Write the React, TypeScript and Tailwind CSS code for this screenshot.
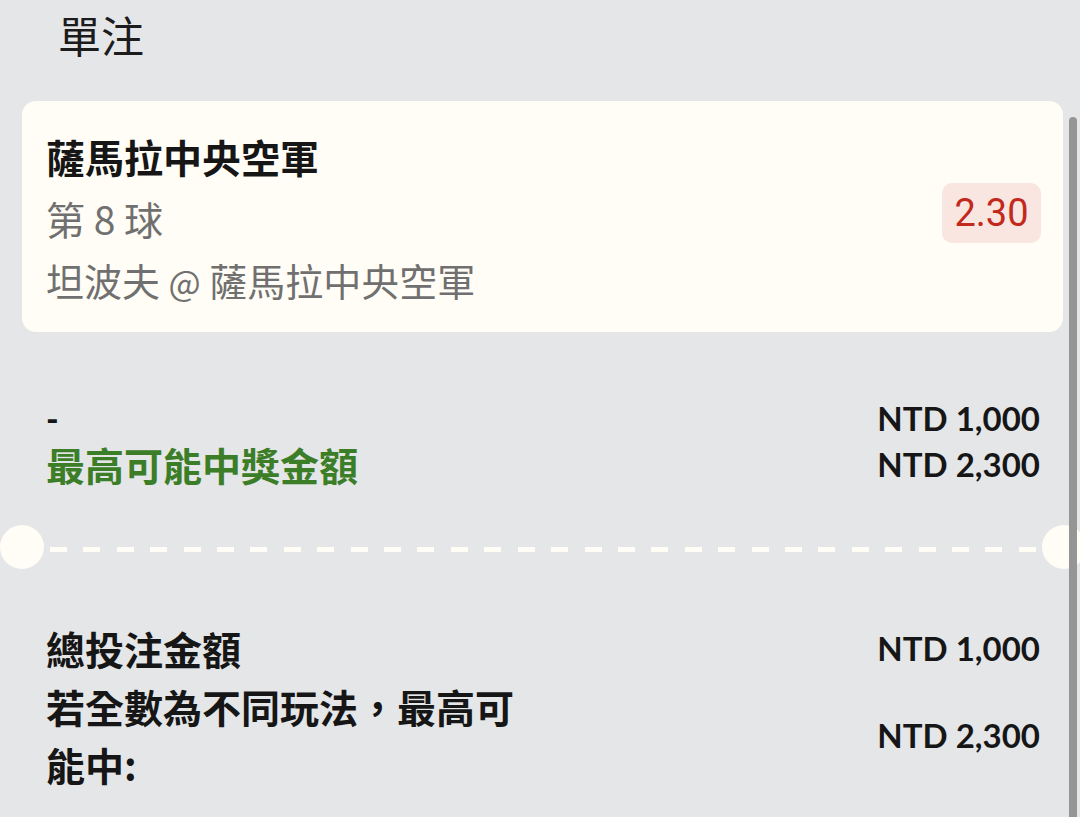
import React from "react";

const cjk = "font-['Noto_Sans_CJK_TC','Noto_Sans',sans-serif]";
const latin = "font-['Lato','Noto_Sans_CJK_TC',sans-serif]";

function Money({ value }: { value: string }) {
  return (
    <span className={`${latin} text-[33px] font-bold text-[#161616] whitespace-nowrap`}>
      NTD {value}
    </span>
  );
}

export default function App() {
  const dashes = Array.from({ length: 30 });

  return (
    <div className={`relative h-[817px] w-[1080px] overflow-hidden bg-[#e5e6e8] ${cjk}`}>
      {/* Title */}
      <div className="pl-[58px] pt-[13px] text-[43px] leading-[42px] text-[#1c1c1c]">單注</div>

      {/* Selection card */}
      <div className="ml-[22px] mr-[17px] mt-[46px] flex items-center justify-between rounded-[14px] bg-[#fffdf5] pl-[24px] pr-[22px] pt-[24px] pb-[21px]">
        <div className="leading-[62px]">
          <div className="text-[39px] font-bold text-[#161616]">薩馬拉中央空軍</div>
          <div className="text-[39px] text-[#707070]">第 8 球</div>
          <div className="h-[62px] text-[38px] text-[#707070]">
            坦波夫 <span className="text-[34px]">@</span> 薩馬拉中央空軍
          </div>
        </div>
        <div className="mb-[10px] flex h-[60px] w-[99px] items-center justify-center rounded-[10px] bg-[#f9e6e0] font-['Roboto',sans-serif] text-[38px] text-[#c3281d]">
          2.30
        </div>
      </div>

      {/* Stake and potential win */}
      <div className="mt-[63px] pl-[46px] pr-[40px] leading-[46px]">
        <div className="flex items-center justify-between">
          <span className={`${latin} text-[34px] font-black text-[#161616]`}>-</span>
          <Money value="1,000" />
        </div>
        <div className="flex items-center justify-between">
          <span className="text-[39px] font-bold text-[#3c7e28]">最高可能中獎金額</span>
          <Money value="2,300" />
        </div>
      </div>

      {/* Ticket divider */}
      <div className="mt-[38px] flex h-[44px] w-[1086px] items-center">
        <div className="h-[44px] w-[44px] shrink-0 rounded-full bg-[#fffdf5]" />
        <div className="flex flex-1 items-center justify-between px-[6px]">
          {dashes.map((_, i) => (
            <div key={i} className="mt-[4px] h-[5px] w-[17px] bg-[#fffdf5]" />
          ))}
        </div>
        <div className="h-[44px] w-[44px] shrink-0 rounded-full bg-[#fffdf5]" />
      </div>

      {/* Totals */}
      <div className="mt-[50px] pl-[46px] pr-[40px] text-[39px] font-bold leading-[58px] text-[#161616]">
        <div className="flex items-center justify-between">
          <span>總投注金額</span>
          <Money value="1,000" />
        </div>
        <div className="flex items-center justify-between">
          <span className="w-[480px]">若全數為不同玩法，最高可能中:</span>
          <Money value="2,300" />
        </div>
      </div>

      {/* Scrollbar */}
      <div className="absolute right-[3px] top-[117px] bottom-0 w-[8px] rounded-t-full bg-[#959595]" />
    </div>
  );
}
